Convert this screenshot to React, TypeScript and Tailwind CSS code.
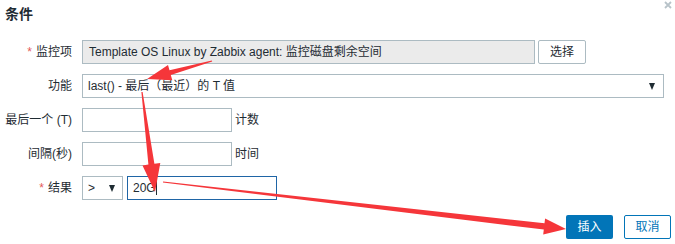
import React from 'react';

const FONT = { fontFamily: '"Liberation Sans", Arial, "Noto Sans CJK SC", sans-serif' };

type Pt = [number, number];

// tapered screenshot-style arrow: thin tail, thicker shaft near the head
const arrowPoints = (from: Pt, to: Pt, head = 20, headW = 9, shaftW = 3, tailW = 0.6): string => {
  const dx = to[0] - from[0];
  const dy = to[1] - from[1];
  const len = Math.hypot(dx, dy);
  const ux = dx / len;
  const uy = dy / len;
  const nx = -uy;
  const ny = ux;
  const bx = to[0] - ux * head;
  const by = to[1] - uy * head;
  const p: Pt[] = [
    [from[0] + nx * tailW, from[1] + ny * tailW],
    [bx + nx * shaftW, by + ny * shaftW],
    [bx + nx * headW, by + ny * headW],
    to,
    [bx - nx * headW, by - ny * headW],
    [bx - nx * shaftW, by - ny * shaftW],
    [from[0] - nx * tailW, from[1] - ny * tailW],
  ];
  return p.map((q) => `${q[0].toFixed(1)},${q[1].toFixed(1)}`).join(' ');
};

const Label: React.FC<{ text: string; required?: boolean }> = ({ text, required }) => (
  <div className="w-[72px] mr-[10px] text-right text-[12px] text-[#1f2c33] whitespace-nowrap">
    {required && <span className="text-[#e45959] mr-[4px]">*</span>}
    {text}
  </div>
);

const Caret = () => (
  <span className="inline-block w-0 h-0 border-l-[3.5px] border-r-[3.5px] border-t-[7px] border-l-transparent border-r-transparent border-t-[#1f2c33]" />
);

export default function App() {
  return (
    <div className="relative w-[675px] h-[244px] bg-white overflow-hidden" style={FONT}>
      <div className="flex justify-between h-[40px]">
        <div className="pl-[5px] pt-[4px] text-[14px] font-bold text-[#1f2c33]">条件</div>
        <svg width="8" height="8" viewBox="0 0 8 8" className="mt-[1px] mr-[3px]">
          <path d="M1 1 L7 7 M7 1 L1 7" stroke="#b8c3c9" strokeWidth="1.8" />
        </svg>
      </div>

      <div className="flex flex-col gap-[10px]">
        <div className="flex items-center h-[24px]">
          <Label text="监控项" required />
          <div className="w-[453px] h-[24px] border border-[#acbbc2] bg-[#ebebeb] pl-[6px] flex items-center text-[12px] text-[#1f2c33] whitespace-nowrap">
            Template OS Linux by Zabbix agent: 监控磁盘剩余空间
          </div>
          <button className="ml-[3px] w-[48px] h-[24px] border border-[#acbbc2] bg-white rounded-[2px] text-[12px] text-[#1f2c33]">
            选择
          </button>
        </div>

        <div className="flex items-center h-[24px]">
          <Label text="功能" />
          <div className="w-[582px] h-[24px] border border-[#acbbc2] bg-white pl-[5px] pr-[8px] flex items-center justify-between text-[12px] text-[#1f2c33] whitespace-nowrap">
            <span>last() - 最后（最近）的 T 值</span>
            <Caret />
          </div>
        </div>

        <div className="flex items-center h-[24px]">
          <Label text="最后一个 (T)" />
          <div className="w-[150px] h-[24px] border border-[#acbbc2] bg-white" />
          <span className="ml-[3px] text-[12px] text-[#1f2c33]">计数</span>
        </div>

        <div className="flex items-center h-[24px]">
          <Label text="间隔(秒)" />
          <div className="w-[150px] h-[24px] border border-[#acbbc2] bg-white" />
          <span className="ml-[3px] text-[12px] text-[#1f2c33]">时间</span>
        </div>

        <div className="flex items-center h-[24px]">
          <Label text="结果" required />
          <div className="w-[41px] h-[24px] border border-[#acbbc2] bg-white pl-[5px] pr-[7px] flex items-center justify-between text-[12px] text-[#1f2c33]">
            <span>&gt;</span>
            <Caret />
          </div>
          <div className="ml-[4px] w-[150px] h-[24px] border border-[#1f65a6] bg-white pl-[5px] flex items-center text-[12px] text-[#1f2c33]">
            20G<span className="inline-block w-[1px] h-[14px] bg-[#1f2c33]" />
          </div>
        </div>
      </div>

      <div className="flex justify-end gap-[11px] pr-[4px] mt-[15px]">
        <button className="w-[47px] h-[24px] rounded-[2px] bg-[#0275b8] text-white text-[12px]">插入</button>
        <button className="w-[47px] h-[24px] rounded-[2px] border border-[#0275b8] bg-white text-[#0275b8] text-[12px]">取消</button>
      </div>

      <svg className="absolute inset-0 pointer-events-none" width="675" height="244">
        <polygon points={arrowPoints([212, 61], [147, 79], 24, 8, 2.5)} fill="#f5363a" />
        <polygon points={arrowPoints([142, 92], [155, 192], 28, 9, 3)} fill="#f5363a" />
        <polygon points={arrowPoints([163, 182], [566, 229], 22, 8, 3.2)} fill="#f5363a" />
      </svg>
    </div>
  );
}
